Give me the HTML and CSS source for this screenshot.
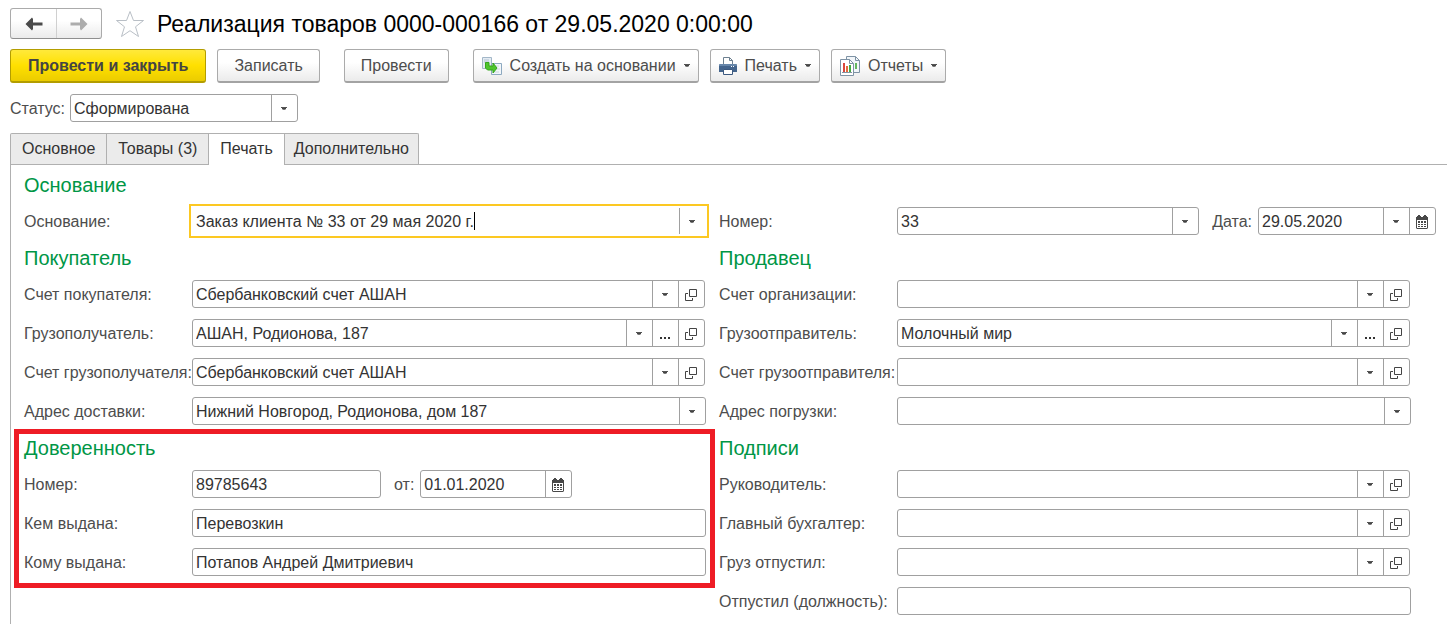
FILE: index.html
```html
<!DOCTYPE html>
<html lang="ru">
<head>
<meta charset="utf-8">
<title>Реализация товаров 0000-000166</title>
<link rel="stylesheet" href="styles.css">
</head>
<body>
<svg class="sprite" aria-hidden="true">
  <symbol id="arrow" viewBox="0 0 6 4"><path d="M0 0h6v1H0z" fill="#555"/><path d="M1 1h4v1H1z" fill="#444"/><path d="M1 2h4L4 3H2z" fill="#777"/></symbol>
  <symbol id="open" viewBox="0 0 12 12"><path d="M4.500.5h7v7h-7zM3 4.500H.5v7h7V9" fill="none" stroke="#444"/></symbol>
  <symbol id="calendar" viewBox="0 0 12 14"><path d="M0 2h1V1h1V0h2v1h1v1h2V1h1V0h2v1h1v1h1v11l-1 1H1l-1-1z" fill="#484848"/><path d="M1 5h10v8H1z" fill="#fff"/><path d="M2 6h2v2H2zM5 6h2v2H5zM8 6h2v2H8zM2 9h2v1H2zM5 9h2v1H5zM8 9h2v1H8zM2 11h2v1H2zM5 11h2v1H5zM8 11h2v1H8z" fill="#484848"/></symbol>
  <symbol id="dots" viewBox="0 0 10 2"><path d="M0 0h2v2H0zM4 0h2v2H4zM8 0h2v2H8z" fill="#333"/></symbol>
</svg>

<header class="titlebar">
  <div class="nav">
    <button type="button" class="nav-button" aria-label="Назад"><svg width="18" height="14" viewBox="0 0 18 14"><path d="M.5 7 7 .5 8 2v3.500h9.500v3H8V12l-1 1.500z" fill="#4a4a4a"/></svg></button>
    <button type="button" class="nav-button" aria-label="Вперед"><svg width="18" height="14" viewBox="0 0 18 14"><path d="M17.500 7 11 .5 10 2v3.500H.5v3H10V12l1 1.500z" fill="#adadad"/></svg></button>
  </div>
  <button type="button" class="star" aria-label="В избранное"><svg width="30" height="28" viewBox="0 0 30 28"><path d="m15 1.500 3.500 9h10l-8 6.300 3 9.700-8.500-5.800-8.500 5.800 3-9.700-8-6.300h10z" fill="#fff" stroke="#b9bfc6"/></svg></button>
  <h1 class="title">Реализация товаров 0000-000166 от 29.05.2020 0:00:00</h1>
</header>

<div class="toolbar">
  <div class="group">
    <button type="button" class="button primary">Провести и закрыть</button>
    <button type="button" class="button">Записать</button>
  </div>
  <button type="button" class="button">Провести</button>
  <div class="group">
    <button type="button" class="button menu">
      <svg width="20" height="18" viewBox="0 0 20 18"><path d="M.5.5h9v11h-9z" fill="#e4ecf3" stroke="#a3b7c8"/><path d="M2 3h5M2 5h5" stroke="#b4c4d2"/><path d="M9.500 6.500h10v11h-10z" fill="#f3f7fa" stroke="#8da9c0"/><path d="M12 9h5M14 12h4M12 15h5" stroke="#ccd8e2"/><path d="M3.500 5.500h3.500V9h4V6l4 5-4 5v-3H5.500l-2-2z" fill="#4fc52d" stroke="#35a51d"/></svg>
      Создать на основании <svg width="6" height="4"><use href="#arrow"/></svg>
    </button>
    <button type="button" class="button menu">
      <svg width="18" height="18" viewBox="0 0 18 18"><path d="M4.500 7V.5h6l3 3V7" fill="#fff" stroke="#6d8090"/><path d="M10.500.5v3h3" fill="none" stroke="#6d8090"/><path d="M0 8l1-1h16l1 1v7H0z" fill="#44658d"/><path d="M0 8l1-1h16l1 1v1H0z" fill="#6686aa"/><path d="M12 9h1v1h-1zM14 9h1v1h-1z" fill="#fff"/><path d="M4.500 12.500h9v5h-9z" fill="#fff" stroke="#3d5a80"/></svg>
      Печать <svg width="6" height="4"><use href="#arrow"/></svg>
    </button>
    <button type="button" class="button menu">
      <svg width="20" height="20" viewBox="0 0 20 20"><path d="M6.500.5h9l4 4v12h-13z" fill="#f2f6f9" stroke="#7e93a5"/><path d="M15.500.5v4h4" fill="none" stroke="#7e93a5"/><path d="M15 7h2v6h-2z" fill="#63b85e"/><path d="M.5 3.500h9l4 4v12H.5z" fill="#fff" stroke="#7e93a5"/><path d="M9.500 3.500v4h4" fill="none" stroke="#7e93a5"/><path d="M3 7h2v9H3z" fill="#d9463d"/><path d="M6 10h2v6H6z" fill="#e36b3c"/><path d="M9 9h2v7H9z" fill="#45ac43"/><path d="M2 16.500h10" stroke="#8294a2"/></svg>
      Отчеты <svg width="6" height="4"><use href="#arrow"/></svg>
    </button>
  </div>
</div>

<div class="status">
  <label for="status">Статус:</label>
  <div class="field status-field">
    <select id="status"><option>Сформирована</option></select>
    <span class="cell select-arrow"><svg width="6" height="4"><use href="#arrow"/></svg></span>
  </div>
</div>

<div class="tabs" role="tablist">
  <button type="button" class="tab" role="tab">Основное</button>
  <button type="button" class="tab" role="tab">Товары (3)</button>
  <button type="button" class="tab active" role="tab" aria-selected="true">Печать</button>
  <button type="button" class="tab" role="tab">Дополнительно</button>
</div>

<main class="panel">
  <div class="column left">
    <section class="section">
      <h2>Основание</h2>
      <div class="row"><label for="basis">Основание:</label>
        <div class="field focused"><input id="basis" type="text" value="Заказ клиента № 33 от 29 мая 2020 г."><span class="caret"></span><button type="button" class="cell" aria-label="Выбрать"><svg width="6" height="4"><use href="#arrow"/></svg></button></div></div>
    </section>
    <section class="section">
      <h2>Покупатель</h2>
      <div class="row"><label for="buyer-account">Счет покупателя:</label>
        <div class="field ref"><input id="buyer-account" type="text" value="Сбербанковский счет АШАН"><button type="button" class="cell" aria-label="Выбрать"><svg width="6" height="4"><use href="#arrow"/></svg></button><button type="button" class="cell" aria-label="Открыть"><svg width="12" height="12"><use href="#open"/></svg></button></div></div>
      <div class="row"><label for="consignee">Грузополучатель:</label>
        <div class="field ref"><input id="consignee" type="text" value="АШАН, Родионова, 187"><button type="button" class="cell" aria-label="Выбрать"><svg width="6" height="4"><use href="#arrow"/></svg></button><button type="button" class="cell more" aria-label="Показать все"><svg width="10" height="2"><use href="#dots"/></svg></button><button type="button" class="cell" aria-label="Открыть"><svg width="12" height="12"><use href="#open"/></svg></button></div></div>
      <div class="row"><label for="consignee-account">Счет грузополучателя:</label>
        <div class="field ref"><input id="consignee-account" type="text" value="Сбербанковский счет АШАН"><button type="button" class="cell" aria-label="Выбрать"><svg width="6" height="4"><use href="#arrow"/></svg></button><button type="button" class="cell" aria-label="Открыть"><svg width="12" height="12"><use href="#open"/></svg></button></div></div>
      <div class="row"><label for="delivery">Адрес доставки:</label>
        <div class="field"><input id="delivery" type="text" value="Нижний Новгород, Родионова, дом 187"><button type="button" class="cell" aria-label="Выбрать"><svg width="6" height="4"><use href="#arrow"/></svg></button></div></div>
    </section>
    <section class="section highlighted">
      <h2>Доверенность</h2>
      <div class="row"><label for="proxy-number">Номер:</label>
        <div class="field proxy-number"><input id="proxy-number" type="text" value="89785643"></div>
        <label class="inline-label" for="proxy-date">от:</label>
        <div class="field proxy-date"><input id="proxy-date" type="text" value="01.01.2020"><button type="button" class="cell" aria-label="Календарь"><svg width="12" height="14"><use href="#calendar"/></svg></button></div></div>
      <div class="row"><label for="issued-by">Кем выдана:</label>
        <div class="field"><input id="issued-by" type="text" value="Перевозкин"></div></div>
      <div class="row"><label for="issued-to">Кому выдана:</label>
        <div class="field"><input id="issued-to" type="text" value="Потапов Андрей Дмитриевич"></div></div>
    </section>
  </div>

  <div class="column right">
    <section class="section untitled">
      <div class="row wide"><label for="number">Номер:</label>
        <div class="field"><input id="number" type="text" value="33"><button type="button" class="cell" aria-label="Выбрать"><svg width="6" height="4"><use href="#arrow"/></svg></button></div>
        <label class="inline-label" for="date">Дата:</label>
        <div class="field date"><input id="date" type="text" value="29.05.2020"><button type="button" class="cell" aria-label="Выбрать"><svg width="6" height="4"><use href="#arrow"/></svg></button><button type="button" class="cell" aria-label="Календарь"><svg width="12" height="14"><use href="#calendar"/></svg></button></div></div>
    </section>
    <section class="section">
      <h2>Продавец</h2>
      <div class="row"><label for="org-account">Счет организации:</label>
        <div class="field ref"><input id="org-account" type="text"><button type="button" class="cell" aria-label="Выбрать"><svg width="6" height="4"><use href="#arrow"/></svg></button><button type="button" class="cell" aria-label="Открыть"><svg width="12" height="12"><use href="#open"/></svg></button></div></div>
      <div class="row"><label for="shipper">Грузоотправитель:</label>
        <div class="field ref"><input id="shipper" type="text" value="Молочный мир"><button type="button" class="cell" aria-label="Выбрать"><svg width="6" height="4"><use href="#arrow"/></svg></button><button type="button" class="cell more" aria-label="Показать все"><svg width="10" height="2"><use href="#dots"/></svg></button><button type="button" class="cell" aria-label="Открыть"><svg width="12" height="12"><use href="#open"/></svg></button></div></div>
      <div class="row"><label for="shipper-account">Счет грузоотправителя:</label>
        <div class="field ref"><input id="shipper-account" type="text"><button type="button" class="cell" aria-label="Выбрать"><svg width="6" height="4"><use href="#arrow"/></svg></button><button type="button" class="cell" aria-label="Открыть"><svg width="12" height="12"><use href="#open"/></svg></button></div></div>
      <div class="row"><label for="loading">Адрес погрузки:</label>
        <div class="field"><input id="loading" type="text"><button type="button" class="cell" aria-label="Выбрать"><svg width="6" height="4"><use href="#arrow"/></svg></button></div></div>
    </section>
    <section class="section">
      <h2>Подписи</h2>
      <div class="row"><label for="head">Руководитель:</label>
        <div class="field ref"><input id="head" type="text"><button type="button" class="cell" aria-label="Выбрать"><svg width="6" height="4"><use href="#arrow"/></svg></button><button type="button" class="cell" aria-label="Открыть"><svg width="12" height="12"><use href="#open"/></svg></button></div></div>
      <div class="row"><label for="accountant">Главный бухгалтер:</label>
        <div class="field ref"><input id="accountant" type="text"><button type="button" class="cell" aria-label="Выбрать"><svg width="6" height="4"><use href="#arrow"/></svg></button><button type="button" class="cell" aria-label="Открыть"><svg width="12" height="12"><use href="#open"/></svg></button></div></div>
      <div class="row"><label for="released">Груз отпустил:</label>
        <div class="field ref"><input id="released" type="text"><button type="button" class="cell" aria-label="Выбрать"><svg width="6" height="4"><use href="#arrow"/></svg></button><button type="button" class="cell" aria-label="Открыть"><svg width="12" height="12"><use href="#open"/></svg></button></div></div>
      <div class="row"><label for="position">Отпустил (должность):</label>
        <div class="field"><input id="position" type="text"></div></div>
    </section>
  </div>
</main>
</body>
</html>
```

FILE: styles.css
```css
* {
  box-sizing: border-box;
}

body {
  margin: 0;
  min-height: 100vh;
  padding: 8px 0 0 10px;
  display: flex;
  flex-direction: column;
  background: #fff;
  color: #4d4d4d;
  font: 16px/20px "Liberation Sans", Arial, sans-serif;
}

button,
input,
select {
  font: inherit;
  color: inherit;
}

svg {
  display: block;
  flex: none;
}

.sprite {
  position: absolute;
  width: 0;
  height: 0;
}

h1,
h2 {
  margin: 0;
  font-weight: normal;
}

.titlebar {
  display: flex;
  align-items: center;
  height: 31px;
}

.nav {
  display: flex;
  height: 31px;
  border: 1px solid #ababab;
  border-bottom-color: #8f8f8f;
  border-radius: 3px;
  background: linear-gradient(#fff 40%, #ebebeb);
}

.nav-button {
  display: flex;
  align-items: center;
  justify-content: center;
  width: 45px;
  padding: 0;
  border: 0;
  background: none;
}

.nav-button + .nav-button {
  border-left: 1px solid #d0d0d0;
}

.star {
  margin: 0 12px 0 13px;
  padding: 0;
  border: 0;
  background: none;
}

.title {
  color: #000;
  font-size: 23px;
  line-height: 28px;
}

.toolbar {
  display: flex;
  gap: 24px;
  margin-top: 10px;
}

.group {
  display: flex;
  gap: 11px;
}

.button {
  display: flex;
  align-items: center;
  height: 34px;
  padding: 0 16px;
  border: 1px solid #ababab;
  border-bottom: 2px solid #a3a3a3;
  border-radius: 3px;
  background: linear-gradient(#fff 40%, #ebebeb);
  color: #4d4d4d;
  white-space: nowrap;
}

.primary {
  padding: 0 17px;
  border-color: #b39d00;
  background: linear-gradient(#ffe93b, #ffe000 50%, #ebcc00);
  color: #444;
  font-weight: bold;
}

.menu {
  gap: 8px;
  padding: 0 8px;
}

.status {
  display: flex;
  align-items: center;
  gap: 5px;
  margin-top: 11px;
}

label {
  padding-top: 2px;
}

.field {
  position: relative;
  display: flex;
  flex: 1;
  min-width: 0;
  height: 28px;
  border: 1px solid #a0a0a0;
  border-radius: 3px;
  background: #fff;
  color: #333;
}

.field input,
.field select {
  flex: 1;
  min-width: 0;
  width: 100%;
  padding: 2px 3px 0;
  border: 0;
  outline: 0;
  background: none;
  appearance: none;
}

.status-field {
  flex: none;
  width: 228px;
}

.cell {
  display: flex;
  flex: none;
  align-items: center;
  justify-content: center;
  width: 26px;
  padding: 2px 1px 0 0;
  border: 0;
  border-left: 1px solid #a0a0a0;
  background: none;
}

.select-arrow {
  position: absolute;
  inset: 0 0 0 auto;
  pointer-events: none;
}

.more {
  padding-top: 10px;
}

.tabs {
  display: flex;
  margin-top: 11px;
}

.tab {
  height: 31px;
  padding: 0 11px;
  border: 1px solid #b0b0b0;
  border-bottom: 0;
  background: #ebebeb;
  color: #333;
}

.tab + .tab {
  border-left: 0;
}

.tab:first-child {
  border-top-left-radius: 2px;
}

.tab:last-child {
  padding: 0 9px;
  border-top-right-radius: 2px;
}

.active {
  height: 32px;
  margin-bottom: -1px;
  padding-bottom: 1px;
  z-index: 1;
  background: #fff;
}

.panel {
  display: flex;
  flex: 1;
  gap: 13px;
  padding: 0 36px 9px 13px;
  border-top: 1px solid #b0b0b0;
  border-left: 1px solid #b0b0b0;
}

.left {
  flex: 1 1 168px;
  min-width: 0;
}

.right {
  flex: 1 1 178px;
  min-width: 0;
}

.section {
  position: relative;
  display: flex;
  flex-direction: column;
  gap: 10px;
  padding-top: 11px;
}

.section:first-child {
  padding-top: 8px;
}

.section.untitled {
  padding-top: 42px;
}

.section h2 {
  color: #009646;
  font-size: 20px;
  line-height: 24px;
}

.row {
  display: flex;
  align-items: center;
}

.row + .row {
  margin-top: 1px;
}

.row > label {
  flex: none;
  white-space: nowrap;
}

.left .row > label:first-child {
  width: 168px;
}

.right .row > label:first-child {
  width: 178px;
}

.row > .inline-label {
  margin: 0 6px 0 13px;
}

.wide {
  margin-right: -25px;
}

.ref {
  margin-right: 1px;
}

.focused {
  border-color: transparent;
  border-radius: 0;
  outline: 2px solid #fcc822;
  outline-offset: 1px;
}

.caret {
  position: absolute;
  top: 4px;
  left: 281px;
  width: 1px;
  height: 18px;
  background: #000;
}

.row > .proxy-number {
  flex: none;
  width: 189px;
}

.row > .proxy-date {
  flex: none;
  width: 152px;
}

.row > .date {
  flex: none;
  width: 178px;
}

.highlighted::after {
  content: "";
  position: absolute;
  inset: 4px -9px -12px -10px;
  border: 5px solid #ee1c25;
  pointer-events: none;
}
```
